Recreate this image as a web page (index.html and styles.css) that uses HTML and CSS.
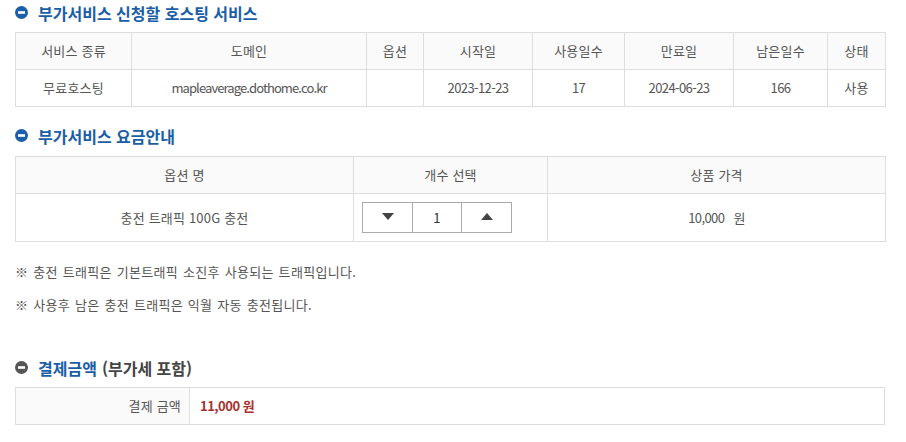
FILE: index.html
```html
<!DOCTYPE html>
<html lang="ko">
<head>
<meta charset="utf-8">
<link rel="stylesheet" href="styles.css">
</head>
<body>
<div class="page">
  <h3 class="title title-first">
    <svg class="ico" width="13" height="13" viewBox="0 0 13 13"><circle cx="6.5" cy="6.5" r="6.5" fill="#1c5fa8"/><rect x="3" y="5.2" width="7" height="2.6" fill="#fff"/></svg>
    <span class="blue">부가서비스 신청할 호스팅 서비스</span>
  </h3>
  <table class="tbl t1">
    <colgroup>
      <col style="width:116px"><col style="width:235px"><col style="width:57px"><col style="width:109px"><col style="width:92px"><col style="width:109px"><col style="width:94px"><col style="width:58px">
    </colgroup>
    <tr class="head"><th>서비스 종류</th><th>도메인</th><th>옵션</th><th>시작일</th><th>사용일수</th><th>만료일</th><th>남은일수</th><th>상태</th></tr>
    <tr><td>무료호스팅</td><td class="latin domain">mapleaverage.dothome.co.kr</td><td></td><td class="latin">2023-12-23</td><td class="latin">17</td><td class="latin">2024-06-23</td><td class="latin">166</td><td>사용</td></tr>
  </table>

  <h3 class="title title-second">
    <svg class="ico" width="13" height="13" viewBox="0 0 13 13"><circle cx="6.5" cy="6.5" r="6.5" fill="#1c5fa8"/><rect x="3" y="5.2" width="7" height="2.6" fill="#fff"/></svg>
    <span class="blue">부가서비스 요금안내</span>
  </h3>
  <table class="tbl t2">
    <colgroup><col style="width:338px"><col style="width:194px"><col style="width:338px"></colgroup>
    <tr class="head"><th>옵션 명</th><th>개수 선택</th><th>상품 가격</th></tr>
    <tr class="tall">
      <td>충전 트래픽 100G 충전</td>
      <td class="stepcell">
        <div class="stepper">
          <button class="step" type="button"><span class="tri down"></span></button>
          <span class="qty">1</span>
          <button class="step" type="button"><span class="tri up"></span></button>
        </div>
      </td>
      <td class="latin">10,000 &nbsp; 원</td>
    </tr>
  </table>

  <p class="note">※ 충전 트래픽은 기본트래픽 소진후 사용되는 트래픽입니다.</p>
  <p class="note">※ 사용후 남은 충전 트래픽은 익월 자동 충전됩니다.</p>

  <h3 class="title title-third">
    <svg class="ico" width="13" height="13" viewBox="0 0 13 13"><circle cx="6.5" cy="6.5" r="6.5" fill="#555"/><rect x="3" y="5.2" width="7" height="2.6" fill="#fff"/></svg>
    <span class="blue">결제금액</span> <span class="gray">(부가세 포함)</span>
  </h3>
  <table class="tbl t3">
    <colgroup><col style="width:174px"><col></colgroup>
    <tr><th class="label">결제 금액</th><td class="amount">11,000 원</td></tr>
  </table>
</div>
</body>
</html>
```

FILE: styles.css
```css
html, body {
  margin: 0;
  padding: 0;
  background: #fff;
}
body {
  font-family: "Noto Sans CJK KR", "Noto Sans", sans-serif;
  font-size: 13px;
  color: #555;
}
.page {
  padding: 1px 0 0 15px;
  width: 870px;
}
.title {
  margin: 0 0 8px 0;
  height: 23px;
  display: flex;
  align-items: center;
  font-size: 16px;
  font-weight: bold;
}
.title .ico {
  flex: none;
  margin-right: 10px;
}
.title .blue { color: #1a5ea6; }
.title .gray { color: #444; margin-left: 5px; }
.title-second { margin-top: 17px; margin-bottom: 9px; }
.title-third { margin-top: 41px; margin-bottom: 8px; }

.tbl {
  width: 870px;
  border-collapse: collapse;
  table-layout: fixed;
}
.tbl th, .tbl td {
  border: 1px solid #ddd;
  text-align: center;
  font-weight: normal;
  color: #555;
  height: 36px;
  padding: 0;
  line-height: 1.2;
  letter-spacing: 0.2px;
}
.tbl .head th { background: #fafafa; }
.t2 .tall td { height: 47px; }
.tbl .latin { letter-spacing: -0.6px; }
.tbl .domain { letter-spacing: -0.9px; }

.stepcell { text-align: left !important; }
.stepper {
  display: flex;
  width: 150px;
  height: 31px;
  margin-left: 8px;
  border: 1px solid #aaa;
  box-sizing: border-box;
  background: #fff;
}
.step {
  width: 49px;
  border: 0;
  background: #fff;
  padding: 0;
  display: flex;
  justify-content: center;
  align-items: flex-start;
  padding-top: 10px;
}
.qty {
  flex: 1;
  border-left: 1px solid #aaa;
  border-right: 1px solid #aaa;
  display: flex;
  align-items: center;
  justify-content: center;
  color: #333;
  font-size: 13px;
}
.tri {
  width: 0;
  height: 0;
  border-left: 6px solid transparent;
  border-right: 6px solid transparent;
}
.tri.down { border-top: 7px solid #444; }
.tri.up { border-bottom: 7px solid #444; }

.note {
  margin: 0;
  line-height: 20px;
  letter-spacing: 0.3px;
  word-spacing: 1px;
}
.note:first-of-type { margin-top: 20px; }
.note + .note { margin-top: 13px; }

.t3 th.label {
  background: #fafafa;
  text-align: right;
  padding-right: 8px;
}
.t3 td.amount {
  text-align: left;
  padding-left: 10px;
  color: #a8302f;
  font-weight: bold;
  letter-spacing: -0.5px;
}
```
